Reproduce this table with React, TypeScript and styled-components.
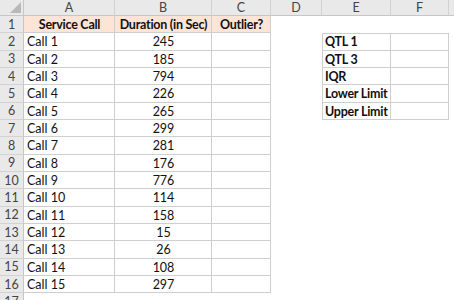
import styled, { createGlobalStyle } from "styled-components";
import * as React from "react";

const GlobalStyle = createGlobalStyle`
    html, body {
        margin: 0;
        padding: 0;
        background: #ffffff;
    }
    body {
        font-family: Lato, "Open Sans", sans-serif;
        font-size: 12.5px;
    }
`;

const COLS = ["A", "B", "C", "D", "E", "F", "G"];
const ROW_H = 17.33;

const calls = [
    245, 185, 794, 226, 265, 299, 281, 176, 776, 114, 158, 15, 26, 108, 297,
];

const stats = ["QTL 1", "QTL 3", "IQR", "Lower Limit", "Upper Limit"];

const Viewport = styled.div`
    width: 454px;
    height: 300px;
    overflow: hidden;
`;

const Sheet = styled.div`
    display: grid;
    grid-template-columns: 24px 91px 97px 59px 51px 69px 58px 64px;
    grid-template-rows: 16px repeat(17, ${ROW_H}px);
    width: max-content;
    color: #111;
`;

const Corner = styled.div`
    position: relative;
    background: #e9e9e9;
    border-right: 1px solid #c6c6c6;
    border-bottom: 1px solid #c6c6c6;
    box-sizing: border-box;
    &::after {
        content: "";
        position: absolute;
        right: 2px;
        bottom: 2px;
        width: 0;
        height: 0;
        border-left: 11px solid transparent;
        border-bottom: 11px solid #b9b9b9;
    }
`;

const ColHead = styled.div`
    display: flex;
    align-items: center;
    justify-content: center;
    background: #e9e9e9;
    color: #444;
    font-size: 12.5px;
    border-right: 1px solid #d2d2d2;
    border-bottom: 1px solid #c6c6c6;
    box-sizing: border-box;
`;

const RowHead = styled.div`
    display: flex;
    align-items: center;
    justify-content: center;
    background: #e9e9e9;
    color: #444;
    font-size: 12.5px;
    border-right: 1px solid #c6c6c6;
    border-bottom: 1px solid #d2d2d2;
    box-sizing: border-box;
`;

const Cell = styled.div<{
    $align?: "left" | "center";
    $bold?: boolean;
    $fill?: string;
    $grid?: boolean;
    $top?: boolean;
    $left?: boolean;
}>`
    display: flex;
    align-items: center;
    justify-content: ${(p) => (p.$align === "center" ? "center" : "flex-start")};
    padding: 0 3px;
    box-sizing: border-box;
    white-space: nowrap;
    overflow: hidden;
    font-weight: ${(p) => (p.$bold ? 700 : 400)};
    letter-spacing: ${(p) => (p.$bold ? "-0.25px" : "0")};
    background: ${(p) => p.$fill || "#ffffff"};
    box-shadow: ${(p) => {
        const lines: string[] = [];
        if (p.$grid) lines.push("inset -1px -1px 0 #cfcfcf");
        if (p.$top) lines.push("inset 0 1px 0 #cfcfcf");
        if (p.$left) lines.push("inset 1px 0 0 #cfcfcf");
        return lines.length ? lines.join(", ") : "none";
    }};
`;

const App = () => {
    const rows: React.ReactNode[] = [];

    for (let r = 1; r <= 17; r++) {
        const cells: React.ReactNode[] = [];
        cells.push(<RowHead key={`h${r}`}>{r}</RowHead>);

        // A:C table
        if (r === 1) {
            cells.push(
                <Cell key="a" $align="center" $bold $grid $fill="#fce4d6">
                    Service Call
                </Cell>,
                <Cell key="b" $align="center" $bold $grid $fill="#fce4d6">
                    Duration (in Sec)
                </Cell>,
                <Cell key="c" $align="center" $bold $grid $fill="#fce4d6">
                    Outlier?
                </Cell>
            );
        } else if (r <= 16) {
            cells.push(
                <Cell key="a" $grid>
                    Call {r - 1}
                </Cell>,
                <Cell key="b" $align="center" $grid>
                    {calls[r - 2]}
                </Cell>,
                <Cell key="c" $grid />
            );
        } else {
            cells.push(<Cell key="a" />, <Cell key="b" />, <Cell key="c" />);
        }

        cells.push(<Cell key="d" />);

        // E:F table
        if (r >= 2 && r <= 6) {
            cells.push(
                <Cell key="e" $bold $grid $left $top={r === 2}>
                    {stats[r - 2]}
                </Cell>,
                <Cell key="f" $grid $top={r === 2} />
            );
        } else {
            cells.push(<Cell key="e" />, <Cell key="f" />);
        }

        cells.push(<Cell key="g" />);
        rows.push(<React.Fragment key={r}>{cells}</React.Fragment>);
    }

    return (
        <>
            <GlobalStyle />
            <Viewport>
                <Sheet>
                    <Corner />
                    {COLS.map((c) => (
                        <ColHead key={c}>{c}</ColHead>
                    ))}
                    {rows}
                </Sheet>
            </Viewport>
        </>
    );
};

export default App;
